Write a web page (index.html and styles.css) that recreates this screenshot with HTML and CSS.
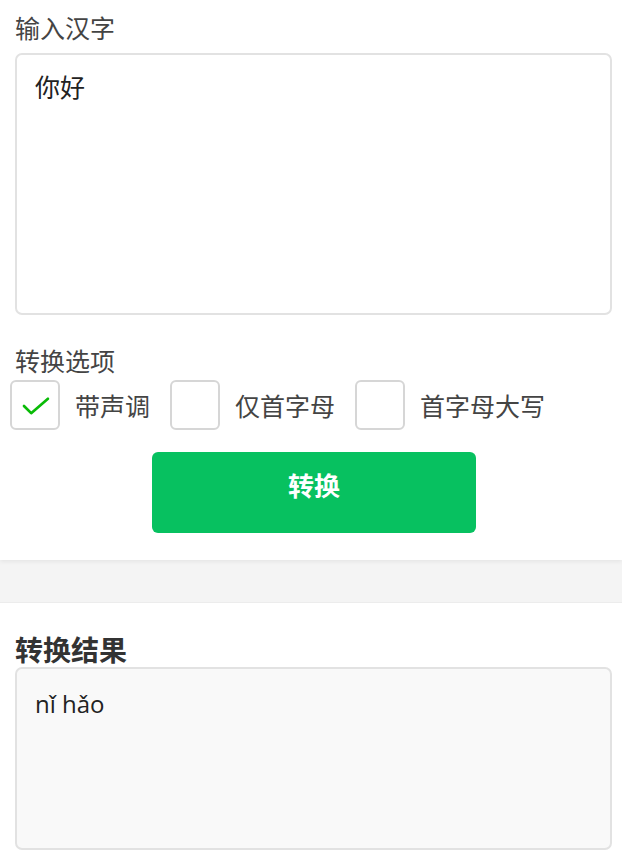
FILE: index.html
```html
<!DOCTYPE html>
<html lang="zh-CN">
<head>
<meta charset="utf-8">
<title>汉字转拼音</title>
<link rel="stylesheet" href="styles.css">
</head>
<body>
<div class="panel">
  <div class="label">输入汉字</div>
  <div class="input-box">你好</div>
  <div class="label options-label">转换选项</div>
  <div class="options">
    <div class="option">
      <span class="box"><svg width="48" height="48" viewBox="0 0 48 48"><path d="M12.5 25 L20 32.5 L37.5 17.5" fill="none" stroke="#09bb07" stroke-width="2.8" stroke-linecap="round" stroke-linejoin="round"/></svg></span>
      <span class="opt-text">带声调</span>
    </div>
    <div class="option">
      <span class="box"></span>
      <span class="opt-text">仅首字母</span>
    </div>
    <div class="option">
      <span class="box"></span>
      <span class="opt-text">首字母大写</span>
    </div>
  </div>
  <div class="btn">转换</div>
</div>
<div class="gap"></div>
<div class="result">
  <div class="result-label">转换结果</div>
  <div class="result-box">nǐ hǎo</div>
</div>
</body>
</html>
```
FILE: styles.css
```css
html, body {
  margin: 0;
  padding: 0;
  background: #ffffff;
}
body {
  font-family: "Open Sans", "Noto Sans CJK SC", sans-serif;
  color: #333333;
  font-size: 25px;
}
.panel {
  background: #ffffff;
  padding: 10px 10px 27px 15px;
  height: 523px;
  position: relative;
  z-index: 1;
  box-shadow: 0 2px 4px rgba(0, 0, 0, 0.06);
}
.label {
  font-family: "Noto Sans CJK SC", sans-serif;
  font-size: 25px;
  line-height: 34px;
  color: #444444;
}
.input-box {
  margin-top: 9px;
  height: 229px;
  border: 2px solid #e2e2e2;
  border-radius: 7px;
  padding: 14px 18px 15px;
  font-family: "Noto Sans CJK SC", sans-serif;
  font-size: 25px;
  line-height: 34px;
  color: #222222;
}
.options-label {
  margin-top: 28px;
}
.options {
  display: flex;
  align-items: center;
  margin-top: 3px;
  margin-left: -5px;
}
.option {
  display: flex;
  align-items: center;
  margin-right: 20px;
}
.box {
  width: 46px;
  height: 46px;
  border: 2px solid #d6d6d6;
  border-radius: 6px;
  margin-right: 15px;
  display: flex;
  align-items: center;
  justify-content: center;
  background: #ffffff;
}
.box svg {
  display: block;
}
.opt-text {
  font-family: "Noto Sans CJK SC", sans-serif;
  font-size: 25px;
  line-height: 34px;
  color: #444444;
}
.btn {
  box-sizing: border-box;
  margin-top: 22px;
  margin-left: 137px;
  width: 324px;
  height: 81px;
  padding-bottom: 16px;
  background: #07c160;
  border-radius: 6px;
  color: #ffffff;
  font-weight: 700;
  font-size: 26px;
  display: flex;
  align-items: center;
  justify-content: center;
  font-family: "Noto Sans CJK SC", sans-serif;
}
.gap {
  height: 42px;
  background: #f4f4f4;
  border-bottom: 1px solid #ececec;
}
.result {
  background: #ffffff;
  padding: 28px 10px 0 15px;
}
.result-label {
  font-family: "Noto Sans CJK SC", sans-serif;
  font-weight: 700;
  font-size: 28px;
  line-height: 36px;
  color: #333333;
}
.result-box {
  margin-top: 0;
  height: 147px;
  border: 2px solid #e2e2e2;
  border-radius: 7px;
  background: #f9f9f9;
  padding: 18px 18px 14px;
  font-size: 24px;
  line-height: 34px;
  color: #222222;
}
```
